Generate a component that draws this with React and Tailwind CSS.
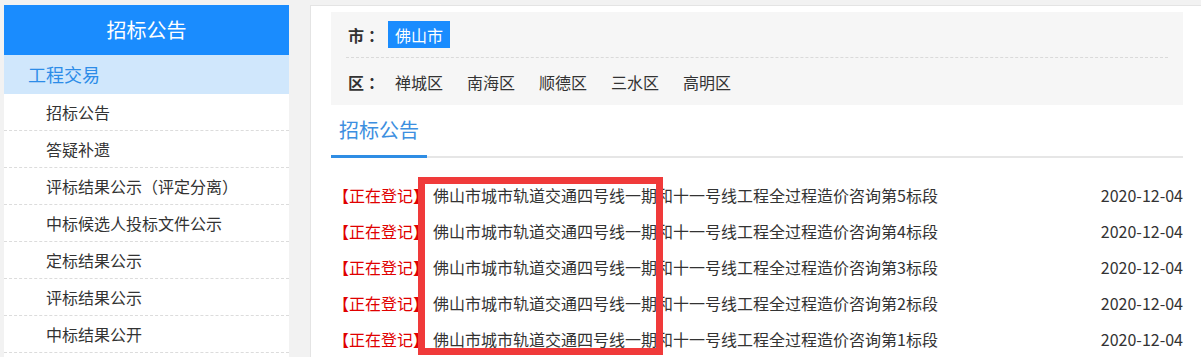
export default function App() {
  const menu = [
    '招标公告',
    '答疑补遗',
    '评标结果公示（评定分离）',
    '中标候选人投标文件公示',
    '定标结果公示',
    '评标结果公示',
    '中标结果公开',
  ];
  const districts = ['禅城区', '南海区', '顺德区', '三水区', '高明区'];
  const rows = [5, 4, 3, 2, 1];

  return (
    <div
      className="relative h-[357px] overflow-hidden bg-[#f2f2f2] text-[#333]"
      style={{ fontFamily: '"Microsoft YaHei", "Noto Sans CJK SC", sans-serif' }}
    >
      <div className="flex items-start pt-[5px] pl-[4px]">
        {/* Sidebar */}
        <div className="w-[285px] shrink-0 bg-white h-[360px]">
          <div className="h-[50px] bg-[#1a8cfe] text-white text-[20px] flex items-center justify-center">
            招标公告
          </div>
          <div className="h-[39px] bg-[#d0e7fc] text-[#2c8ce8] text-[18px] flex items-center pl-[24px]">
            工程交易
          </div>
          {menu.map((m) => (
            <div
              key={m}
              className="h-[37px] border-b border-dashed border-[#dcdcdc] text-[16px] flex items-center pl-[42px]"
            >
              {m}
            </div>
          ))}
        </div>

        {/* Main panel */}
        <div className="ml-[21px] flex-1 bg-white border-l border-t border-[#e4e4e4] pl-[20px] pr-[18px] pt-[6px] min-h-[400px]">
          <div className="bg-[#f6f6f6] px-[15px] text-[16px]">
            <div className="h-[46px] flex items-center border-b border-dashed border-[#dadada]">
              <span className="w-[42px] font-bold pl-[2px] tracking-[4px]">市：</span>
              <span className="h-[27px] px-[7px] bg-[#1a8cfe] text-white flex items-center">佛山市</span>
            </div>
            <div className="h-[47px] flex items-center">
              <span className="w-[42px] font-bold pl-[2px] tracking-[4px]">区：</span>
              {districts.map((d) => (
                <span key={d} className="px-[7px] mr-[10px]">
                  {d}
                </span>
              ))}
            </div>
          </div>

          <div className="h-[53px] border-b-2 border-[#e6e6e6] flex items-end">
            <div className="w-[96px] h-[51px] -mb-[2px] border-b-[3px] border-[#2f8de4] text-[#3d8fe0] text-[20px] flex items-center justify-center pb-[2px]">
              招标公告
            </div>
          </div>

          <div className="pt-[19px]">
            {rows.map((n) => (
              <div key={n} className="h-[36px] flex items-center text-[16px]">
                <span className="text-[#e00000] ml-[2px]">【正在登记】</span>
                <span className="flex-1 ml-[4px]">
                  佛山市城市轨道交通四号线一期和十一号线工程全过程造价咨询第{n}标段
                </span>
                <span>2020-12-04</span>
              </div>
            ))}
          </div>
        </div>
      </div>

      {/* annotation box */}
      <div className="absolute left-[418px] top-[177px] w-[245px] h-[178px] border-[7px] border-[#f03a3a]" />
    </div>
  );
}
